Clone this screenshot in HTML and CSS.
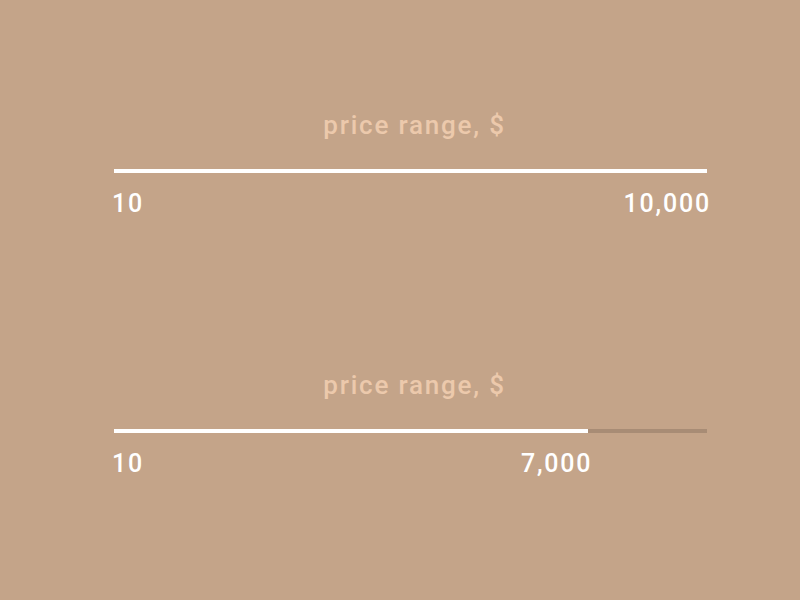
FILE: index.html
```html
<!DOCTYPE html>
<html lang="en">
  <head>
    <meta charset="utf-8" />
    <title>Price range</title>
    <link rel="stylesheet" href="styles.css">
  </head>
  <body>
    <div class="main">
      <div class="range-container">
        <div class="title">price range, $</div>
        <div class="track">
          <div class="track-fill" style="width: 100%"></div>
        </div>
        <div class="range-labels" style="width: calc(100% + 6px)">
          <span class="label">10</span>
          <span class="label">10,000</span>
        </div>
      </div>
      <div class="range-container">
        <div class="title">price range, $</div>
        <div class="track">
          <div class="track-fill" style="width: 80%"></div>
        </div>
        <div class="range-labels" style="width: calc(80% + 6px)">
          <span class="label">10</span>
          <span class="label">7,000</span>
        </div>
      </div>
    </div>
  </body>
</html>
```

FILE: styles.css
```css
body {
  margin: 0;
  background-color: #c4a489;
  font-family: Roboto, "Liberation Sans", sans-serif;
}
.main {
  width: 593px;
  margin-left: 114px;
  padding-top: 107px;
  display: flex;
  flex-direction: column;
  gap: 149px;
}
.range-container {
  width: 100%;
}
.title {
  text-align: center;
  color: #ecc9ac;
  font-size: 26px;
  font-weight: 500;
  letter-spacing: 1.8px;
  padding-left: 8px;
  line-height: 36px;
}
.track {
  margin-top: 26px;
  height: 4px;
  background-color: #a88c75;
}
.track-fill {
  height: 100%;
  background-color: white;
}
.range-labels {
  display: flex;
  justify-content: space-between;
  margin-top: 17px;
  margin-left: -2px;
}
.label {
  color: white;
  font-size: 25px;
  font-weight: 500;
  line-height: 28px;
  letter-spacing: 1.8px;
}
```
